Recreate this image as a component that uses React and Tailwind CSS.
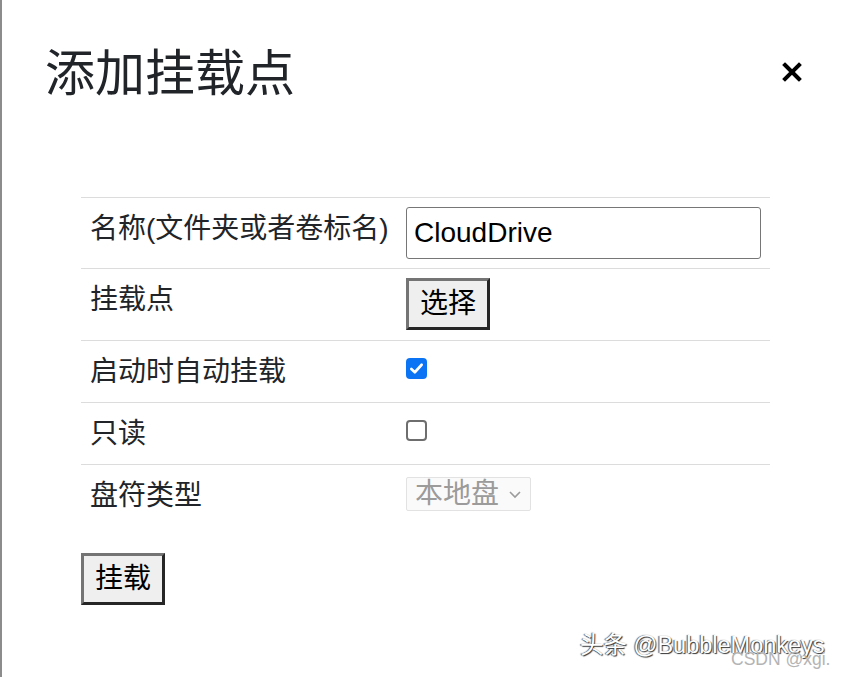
import { useState } from 'react';

const font = { fontFamily: '"Liberation Sans", "Noto Sans CJK SC", sans-serif' };

function Row({ label, children, extra = '' }) {
  return (
    <div className={`flex items-start pt-[9px] pb-[9px] border-t border-[#dcdcdc] ${extra}`}>
      <div className="w-[316px] shrink-0 pl-[9px] text-[28px] leading-[43px] text-[#212529]">{label}</div>
      <div className="flex-1 pl-[9px]">{children}</div>
    </div>
  );
}

function Check({ checked, onClick }) {
  return (
    <button
      type="button"
      onClick={onClick}
      className={`mt-[8px] w-[21px] h-[21px] rounded-[4px] flex items-center justify-center ${
        checked ? 'bg-[#0b74f5] border-0' : 'bg-white border-2 border-[#6e6e6e]'
      }`}
    >
      {checked && (
        <svg width="15" height="15" viewBox="0 0 16 16">
          <path d="M2.5 8.5 L6.2 12 L13.5 4" fill="none" stroke="white" strokeWidth="2.8" strokeLinecap="round" strokeLinejoin="round" />
        </svg>
      )}
    </button>
  );
}

export default function App() {
  const [name, setName] = useState('CloudDrive');
  const [autoMount, setAutoMount] = useState(true);
  const [readOnly, setReadOnly] = useState(false);

  return (
    <div className="relative w-[846px] h-[677px] overflow-hidden bg-white border-l-2 border-[#8c8c8c]" style={font}>
      <div className="flex items-start justify-between pt-[44px] pl-[43px] pr-[42px]">
        <h1 className="text-[50px] leading-[60px] text-[#212529] font-normal">添加挂载点</h1>
        <button className="mt-[16px] w-[24px] h-[24px] flex items-center justify-center" aria-label="Close">
          <svg width="20" height="20" viewBox="0 0 20 20">
            <path d="M3 3 L17 17 M17 3 L3 17" stroke="black" strokeWidth="4" strokeLinecap="square" />
          </svg>
        </button>
      </div>

      <div className="ml-[79px] mt-[93px] w-[689px]">
        <Row label="名称(文件夹或者卷标名)">
          <input
            value={name}
            onChange={(e) => setName(e.target.value)}
            className="w-[355px] h-[52px] border border-[#767676] rounded-[3px] pl-[7px] text-[28px] text-black outline-none"
            style={font}
          />
        </Row>
        <Row label="挂载点" extra="pb-[10px]">
          <button
            className="h-[52px] px-[11px] bg-[#efefef] border-[3px] border-t-[#747474] border-l-[#747474] border-r-[#262626] border-b-[#262626] text-[28px] leading-[40px] text-black"
          >
            选择
          </button>
        </Row>
        <Row label="启动时自动挂载">
          <Check checked={autoMount} onClick={() => setAutoMount(!autoMount)} />
        </Row>
        <Row label="只读">
          <Check checked={readOnly} onClick={() => setReadOnly(!readOnly)} />
        </Row>
        <Row label="盘符类型">
          <div className="mt-[3px] w-[125px] h-[34px] flex items-center border border-[#e2e2e2] rounded-[2px] bg-[#fafafa] pl-[8px]">
            <span className="text-[28px] leading-[32px] text-[#9b9b9b]">本地盘</span>
            <svg className="ml-[9px]" width="14" height="10" viewBox="0 0 14 10">
              <path d="M2 3 L7 8 L12 3" fill="none" stroke="#9b9b9b" strokeWidth="1.6" />
            </svg>
          </div>
        </Row>

        <button
          className="mt-[27px] h-[52px] px-[11px] bg-[#efefef] border-[3px] border-t-[#747474] border-l-[#747474] border-r-[#262626] border-b-[#262626] text-[28px] leading-[40px] text-black"
        >
          挂载
        </button>
      </div>

      <div
        className="absolute left-[578px] top-[630px] text-[23.5px] leading-[30px] text-white"
        style={{ textShadow: '1px 1px 1px #333, -1px 0 1px #555' }}
      >
        头条 @BubbleMonkeys
      </div>
      <div className="absolute left-[729px] top-[648px] text-[17.5px] leading-[22px] text-[#b4b4b4]">CSDN @xgi.</div>
    </div>
  );
}
